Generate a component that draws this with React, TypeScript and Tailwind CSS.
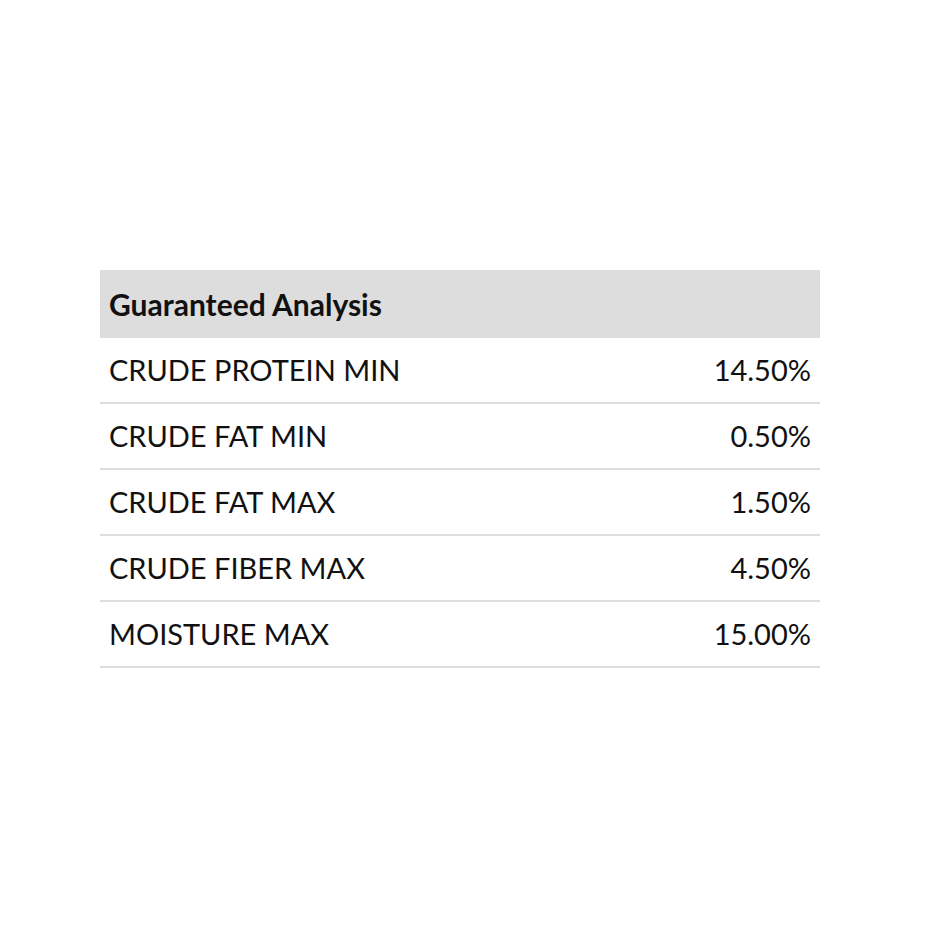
const rows = [
  { label: "CRUDE PROTEIN MIN", value: "14.50%" },
  { label: "CRUDE FAT MIN", value: "0.50%" },
  { label: "CRUDE FAT MAX", value: "1.50%" },
  { label: "CRUDE FIBER MAX", value: "4.50%" },
  { label: "MOISTURE MAX", value: "15.00%" },
];

export default function App() {
  return (
    <div className="w-[940px] h-[940px] bg-white pt-[270px] px-[100px] font-['Lato',sans-serif] text-[#111]">
      <div className="w-[720px]">
        <div className="h-[68px] bg-[#dddddd] flex items-center px-[9px]">
          <span className="text-[30px] font-bold">Guaranteed Analysis</span>
        </div>
        {rows.map((r) => (
          <div
            key={r.label}
            className="h-[66px] flex items-center justify-between px-[9px] border-b-2 border-[#dedede]"
          >
            <span className="text-[29px]">{r.label}</span>
            <span className="text-[29px]">{r.value}</span>
          </div>
        ))}
      </div>
    </div>
  );
}
